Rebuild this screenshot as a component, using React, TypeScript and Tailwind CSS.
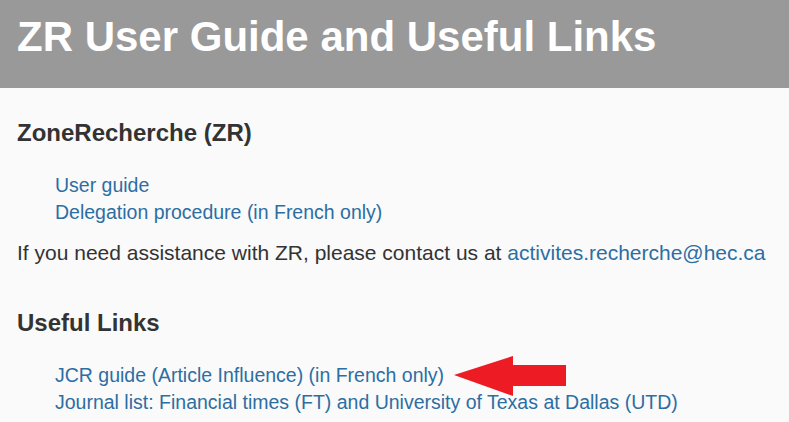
export default function App() {
  const zrLinks = ["User guide", "Delegation procedure (in French only)"];

  return (
    <div className="min-h-screen bg-[#fafafa] font-['Liberation_Sans',Arial,sans-serif] text-[#333333]">
      <header className="h-[88px] bg-[#999999] pl-[17px] pt-[14px]">
        <h1 className="text-[42px] font-bold leading-[46px] text-white">ZR User Guide and Useful Links</h1>
      </header>

      <main className="px-[17px] pt-[32px]">
        <h3 className="mb-[26px] text-[24px] font-bold leading-[26px]">ZoneRecherche (ZR)</h3>
        <ul className="pl-[38px] text-[19.5px] leading-[27px]">
          {zrLinks.map((label) => (
            <li key={label}>
              <a href="#" className="text-[#2c6ea2]">{label}</a>
            </li>
          ))}
        </ul>
        <p className="mt-[13px] text-[21px] leading-[27px]">
          If you need assistance with ZR, please contact us at{" "}
          <a href="#" className="text-[#2c6ea2]">activites.recherche@hec.ca</a>
        </p>

        <h3 className="mb-[26px] mt-[44px] text-[24px] font-bold leading-[26px]">Useful Links</h3>
        <ul className="pl-[38px] text-[19.5px] leading-[27px]">
          <li className="flex items-center">
            <a href="#" className="text-[#2c6ea2]">JCR guide (Article Influence) (in French only)</a>
            <svg width="112" height="40" viewBox="0 0 112 40" className="ml-[10px] -my-[7px] shrink-0">
              <polygon points="0,19 59,0 59,9 112,9 112,30 59,30 59,40" fill="#ed1c24" />
            </svg>
          </li>
          <li>
            <a href="#" className="text-[#2c6ea2]">
              Journal list: Financial times (FT) and University of Texas at Dallas (UTD)
            </a>
          </li>
        </ul>
      </main>
    </div>
  );
}
